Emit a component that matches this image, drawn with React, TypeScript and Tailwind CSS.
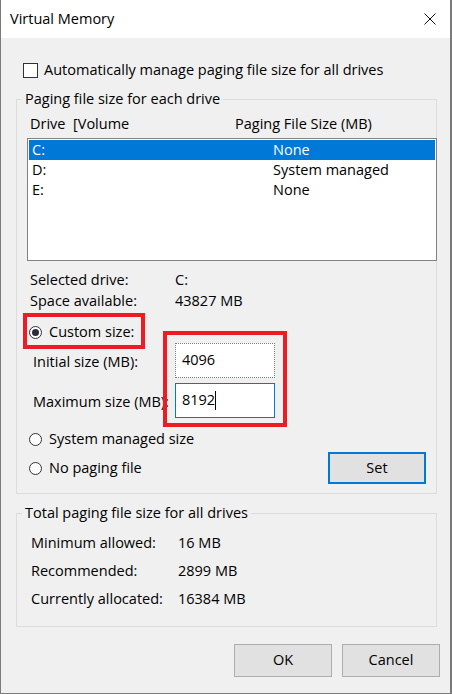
import React from 'react';

const Radio: React.FC<{ checked?: boolean }> = ({ checked }) => (
  <span className="w-[13px] h-[13px] rounded-full border border-[#333] bg-white flex items-center justify-center shrink-0">
    {checked && <span className="w-[7px] h-[7px] rounded-full bg-[#2f2a3a]" />}
  </span>
);

const drives = [
  { drive: 'C:', size: 'None', selected: true },
  { drive: 'D:', size: 'System managed' },
  { drive: 'E:', size: 'None' },
];

const totals = [
  ['Minimum allowed:', '16 MB'],
  ['Recommended:', '2899 MB'],
  ['Currently allocated:', '16384 MB'],
];

const App: React.FC = () => {
  return (
    <div className="w-[452px] h-[694px] flex flex-col border-l border-r-2 border-b border-[#7a7a7a] bg-[#f0f0f0] font-['Open_Sans',sans-serif] text-[14.5px] leading-none text-black overflow-hidden">
      {/* Title bar */}
      <div className="h-[38px] bg-white flex items-center justify-between pl-[9px] pr-[14px] pt-[1px] shrink-0">
        <span>Virtual Memory</span>
        <svg width="12" height="12" viewBox="0 0 12 12" className="mt-[-2px]">
          <path d="M0.5 0.5 L11.5 11.5 M11.5 0.5 L0.5 11.5" stroke="#111" strokeWidth="1" />
        </svg>
      </div>

      {/* Body */}
      <div className="flex-1 pl-[15px]">
        <div className="mt-[22px] h-[20px] flex items-center pl-[7px]">
          <span className="w-[15px] h-[15px] border border-[#333] bg-white" />
          <span className="ml-[6px]">Automatically manage paging file size for all drives</span>
        </div>

        {/* Paging file size for each drive */}
        <div className="mt-[19px] relative w-[421px] h-[395px] border border-[#dcdcdc]">
          <span className="absolute left-[5px] top-[-8px] px-[3px] bg-[#f0f0f0]">Paging file size for each drive</span>

          <div className="mt-[14px] h-[20px] flex items-center pl-[13px]">
            <span className="w-[43px]">Drive</span>
            <span className="w-[162px]">[Volume</span>
            <span>Paging File Size (MB)</span>
          </div>

          <div className="mt-[4px] ml-[10px] w-[410px] h-[123px] border border-[#828282] bg-white p-[1px]">
            {drives.map((d) => (
              <div
                key={d.drive}
                className={`h-[20px] flex items-center pl-[3px] ${d.selected ? 'bg-[#0078d7] text-white' : ''}`}
              >
                <span className="w-[241px]">{d.drive}</span>
                <span>{d.size}</span>
              </div>
            ))}
          </div>

          <div className="mt-[9px] h-[21px] flex items-center pl-[13px]">
            <span className="w-[145px]">Selected drive:</span>
            <span>C:</span>
          </div>
          <div className="h-[21px] flex items-center pl-[13px]">
            <span className="w-[145px]">Space available:</span>
            <span>43827 MB</span>
          </div>

          <div className="mt-[1px] h-[114px] flex items-start">
            <div className="w-[146px] shrink-0 flex flex-col">
              <div className="ml-[6px] w-[122px] h-[36px] border-4 border-[#ed1c24] flex items-center pl-[2px] pt-[3px]">
                <Radio checked />
                <span className="ml-[7px]">Custom size:</span>
              </div>
              <div className="mt-[3px] h-[20px] flex items-center pl-[16px] whitespace-nowrap">Initial size (MB):</div>
              <div className="mt-[20px] h-[20px] flex items-center pl-[16px] whitespace-nowrap">Maximum size (MB):</div>
            </div>
            <div className="relative mt-[18px] w-[124px] border-4 border-[#ed1c24] pl-[8px] pt-[8px] pb-[5px] flex flex-col gap-[5px]">
              <div className="w-[100px] h-[35px] bg-white border border-dotted border-[#7a7a7a] flex items-center pl-[6px]">4096</div>
              <div className="w-[100px] h-[35px] bg-white border border-[#0078d7] flex items-center pl-[6px]">
                8192<span className="w-[1px] h-[19px] bg-black" />
              </div>
            </div>
          </div>

          <div className="mt-[2px] h-[20px] flex items-center pl-[12px]">
            <Radio />
            <span className="ml-[7px]">System managed size</span>
          </div>
          <div className="mt-[3px] h-[32px] flex items-center justify-between pl-[12px] pr-[10px]">
            <div className="flex items-center">
              <Radio />
              <span className="ml-[7px]">No paging file</span>
            </div>
            <button className="w-[98px] h-[32px] border-2 border-[#0078d7] bg-[#e1e1e1]">Set</button>
          </div>
        </div>

        {/* Totals */}
        <div className="mt-[19px] relative w-[421px] h-[114px] border border-[#dcdcdc] pt-[15px]">
          <span className="absolute left-[5px] top-[-8px] px-[3px] bg-[#f0f0f0]">Total paging file size for all drives</span>
          {totals.map(([label, value]) => (
            <div key={label} className="h-[28px] flex items-center pl-[14px]">
              <span className="w-[147px]">{label}</span>
              <span>{value}</span>
            </div>
          ))}
        </div>

        <div className="mt-[17px] flex justify-end gap-[10px] pr-[10px]">
          <button className="w-[98px] h-[33px] border border-[#adadad] bg-[#e1e1e1]">OK</button>
          <button className="w-[98px] h-[33px] border border-[#adadad] bg-[#e1e1e1]">Cancel</button>
        </div>
      </div>
    </div>
  );
};

export default App;
